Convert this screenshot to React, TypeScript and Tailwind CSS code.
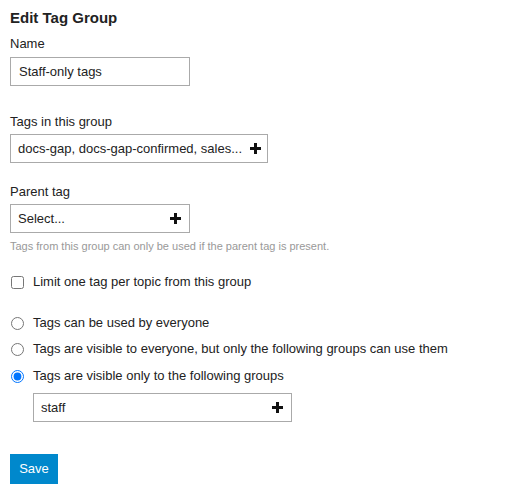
import React from "react";

function Plus() {
  return (
    <svg width="11" height="11" viewBox="0 0 11 11" className="shrink-0">
      <rect x="4" y="0" width="3" height="11" fill="#111" />
      <rect x="0" y="4" width="11" height="3" fill="#111" />
    </svg>
  );
}

function Chooser({ text, className }: { text: string; className: string }) {
  return (
    <div
      className={`flex items-center justify-between gap-2 border border-[#aaa] bg-white pl-[7px] pr-[8px] text-[13px] text-[#222] ${className}`}
    >
      <span className="whitespace-nowrap">{text}</span>
      <Plus />
    </div>
  );
}

export default function App() {
  return (
    <div className="min-h-[500px] bg-white px-[10px] pt-[8px] text-[#222]" style={{ fontFamily: "'Liberation Sans', Arial, sans-serif" }}>
      <h2 className="text-[15px] font-bold leading-[20px]">Edit Tag Group</h2>

      <div className="mt-[8px] text-[13px] leading-[16px]">Name</div>
      <div className="mt-[5px] flex h-[29px] w-[180px] items-center border border-[#aaa] pl-[8px] text-[13px]">
        Staff-only tags
      </div>

      <div className="mt-[28px] text-[13px] leading-[16px]">Tags in this group</div>
      <Chooser text="docs-gap, docs-gap-confirmed, sales..." className="mt-[4px] h-[29px] w-[258px]" />

      <div className="mt-[21px] text-[13px] leading-[16px]">Parent tag</div>
      <Chooser text="Select..." className="mt-[4px] h-[29px] w-[180px]" />
      <p className="mt-[6px] text-[11px] leading-[14px] text-[#999]">
        Tags from this group can only be used if the parent tag is present.
      </p>

      <label className="mt-[21px] flex items-center gap-[9px] text-[13px] leading-[16px]">
        <input type="checkbox" className="m-0 ml-[1px] h-[13px] w-[13px]" />
        Limit one tag per topic from this group
      </label>

      <div className="mt-[25px] flex flex-col gap-[10px] text-[13px] leading-[16px]">
        <label className="flex items-center gap-[9px]">
          <input type="radio" name="perm" className="m-0 ml-[1px] h-[13px] w-[13px]" />
          Tags can be used by everyone
        </label>
        <label className="flex items-center gap-[9px]">
          <input type="radio" name="perm" className="m-0 ml-[1px] h-[13px] w-[13px]" />
          Tags are visible to everyone, but only the following groups can use them
        </label>
        <label className="mt-[1px] flex items-center gap-[9px]">
          <input type="radio" name="perm" defaultChecked className="m-0 ml-[1px] h-[13px] w-[13px]" />
          Tags are visible only to the following groups
        </label>
      </div>

      <Chooser text="staff" className="ml-[23px] mt-[9px] h-[29px] w-[259px]" />

      <button className="mt-[32px] h-[30px] w-[48px] bg-[#0088cc] text-[13px] text-white">Save</button>
    </div>
  );
}
